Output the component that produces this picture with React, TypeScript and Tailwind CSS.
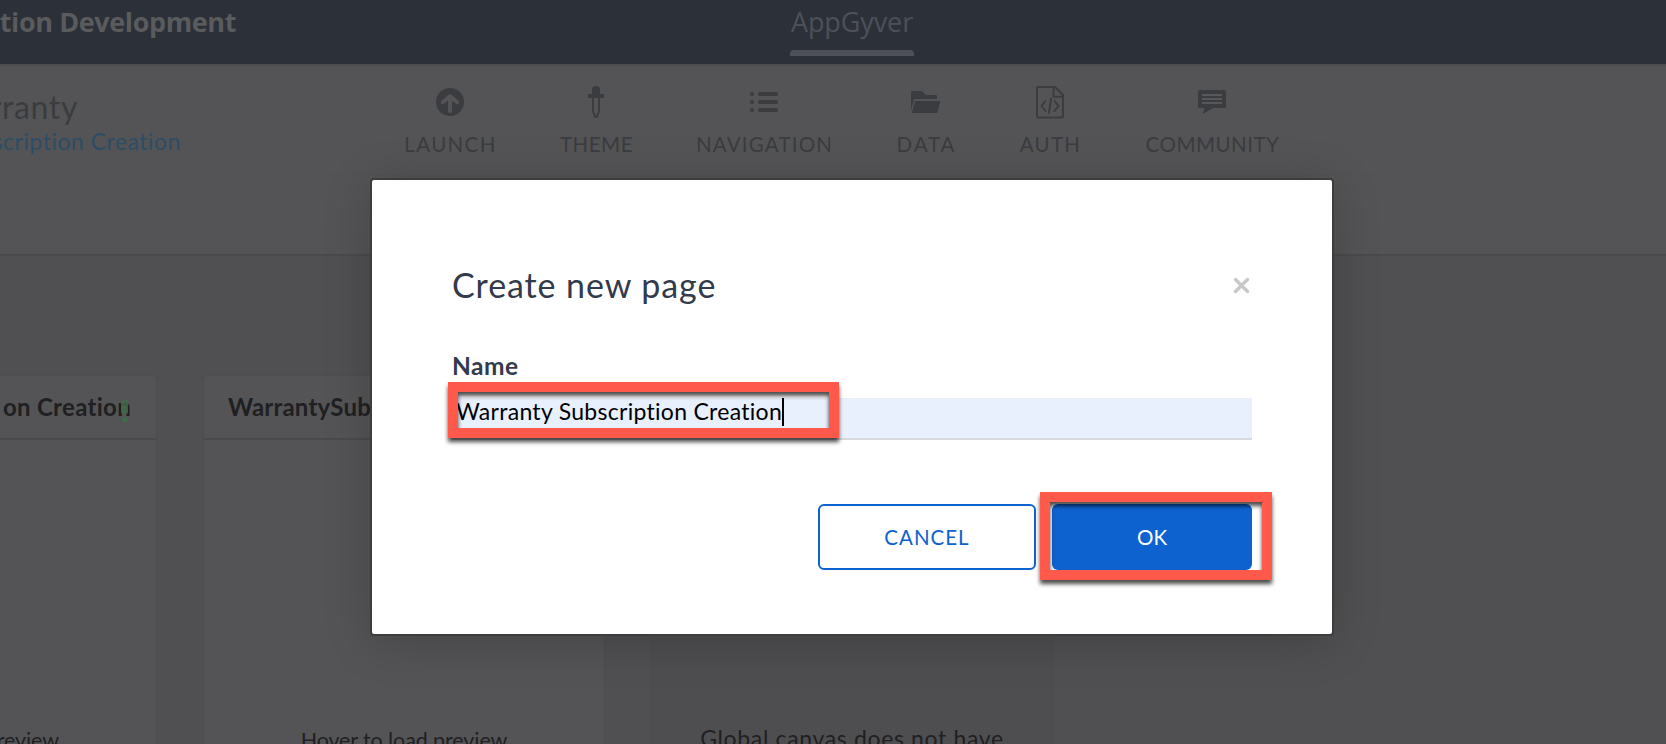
import type { ReactNode } from "react";

const icon = "#3b3c40";

function LaunchIcon() {
  return (
    <svg width="28" height="28" viewBox="0 0 28 28">
      <circle cx="14" cy="14" r="14" fill={icon} />
      <path d="M14 23V8.5M6.8 14.3L14 8.2l7.2 6.1" fill="none" stroke="#545456" strokeWidth="4" strokeLinecap="round" strokeLinejoin="round" />
    </svg>
  );
}

function ThemeIcon() {
  return (
    <svg width="16" height="32" viewBox="0 0 16 32">
      <path d="M4 8V4a4 4 0 0 1 8 0v4h4v4H0V8z" fill={icon} />
      <path d="M5 12v13l2 5.8h2L11 25V12" fill="none" stroke={icon} strokeWidth="2" />
    </svg>
  );
}

function NavigationIcon() {
  return (
    <svg width="28" height="20" viewBox="0 0 28 20" fill={icon}>
      {[0, 8, 16].map((y) => (
        <g key={y}>
          <circle cx="2" cy={y + 2} r="2" />
          <rect x="8" y={y} width="20" height="4" rx="1.8" />
        </g>
      ))}
    </svg>
  );
}

function DataIcon() {
  return (
    <svg width="30" height="22" viewBox="0 0 30 22" fill={icon}>
      <path d="M0 20V1.2Q0 0 1.2 0H10q1 0 1.7.8L14.6 4H25q1 0 1 1v3H4q-1 0-1.3 1z" />
      <path d="M5 10h23.2q1.2 0 .9 1.2L26.7 21q-.3 1-1.3 1H.8L3.600 11q.3-1 1.400-1z" />
    </svg>
  );
}

function AuthIcon() {
  return (
    <svg width="28" height="33" viewBox="0 0 28 33" fill="none" stroke={icon} strokeWidth="2" strokeLinejoin="round" strokeLinecap="round">
      <path d="M1 2.200Q1 1 2.200 1H19l8 8v21.500q0 1-1 1H2q-1 0-1-1z" />
      <path d="M17.500 1v9.800H27" />
      <path d="M9.500 15L5.500 20l4 5M18.500 15l4 5-4 5M15 12.500L13 27" />
    </svg>
  );
}

function CommunityIcon() {
  return (
    <svg width="28" height="24" viewBox="0 0 28 24">
      <path d="M1.500 0h25Q28 0 28 1.500v15q0 1.500-1.500 1.500H15.500L4.500 24 6.500 18h-5Q0 18 0 16.500v-15Q0 0 1.500 0z" fill={icon} />
      <path d="M4 5h20M4 9h20M4 13h20" stroke="#58585a" strokeWidth="1.800" />
    </svg>
  );
}

const tools: { label: string; cls: string; icon: ReactNode }[] = [
  { label: "LAUNCH", cls: "w-[90px] tracking-[1.36px]", icon: <LaunchIcon /> },
  { label: "THEME", cls: "w-[72px] tracking-[0.5px]", icon: <ThemeIcon /> },
  { label: "NAVIGATION", cls: "w-[134px] tracking-[1.2px]", icon: <NavigationIcon /> },
  { label: "DATA", cls: "w-[60px] tracking-[1.9px]", icon: <DataIcon /> },
  { label: "AUTH", cls: "w-[58px] tracking-[1.27px]", icon: <AuthIcon /> },
  { label: "COMMUNITY", cls: "w-[136px] tracking-[0.5px]", icon: <CommunityIcon /> },
];

function Header() {
  return (
    <header className="flex h-16 shrink-0 bg-[#2c3038] font-['Open_Sans',sans-serif] text-[27px] leading-[43px]">
      <div className="flex w-[236px] justify-end whitespace-nowrap font-bold tracking-[-0.4px] text-[#5a5b5d]">tion Development</div>
      <div className="ml-[554px] flex w-[124px] flex-col items-center text-[#4d5059]">
        <span className="tracking-[-0.1px]">AppGyver</span>
        <span className="mt-[7px] h-[6px] w-full rounded-t-[4px] bg-[#4d5059]" />
      </div>
    </header>
  );
}

function Toolbar() {
  return (
    <div className="flex h-[112px] shrink-0 border-b border-t-2 border-b-[#525254] border-t-[#4c4c4e] bg-[#545456]">
      <div className="w-[405px] pt-[23px]">
        <div className="flex w-[78px] justify-end whitespace-nowrap text-[32px] leading-9 tracking-[0.6px] text-[#3b3c40]">rranty</div>
        <div className="mt-0.5 flex w-[181px] justify-end whitespace-nowrap text-[23px] leading-7 tracking-[0.5px] text-[#2c4d65]">scription Creation</div>
      </div>
      <nav className="flex gap-[65px] pt-[18px] text-[20.5px] leading-6 text-[#3b3c40]">
        {tools.map((t) => (
          <div key={t.label} className={"flex flex-col items-center whitespace-nowrap " + t.cls}>
            <div className="flex h-9 items-center">{t.icon}</div>
            <div className="mt-3 pl-px">{t.label}</div>
          </div>
        ))}
      </nav>
    </div>
  );
}

function Cards() {
  return (
    <div className="flex h-[368px] text-[#1f2022]">
      <div className="w-[156px] rounded-tr-[4px] bg-[#545456] shadow-[0_0_2px_rgba(0,0,0,0.1)]">
        <div className="relative flex h-16 items-center justify-end whitespace-nowrap border-b-2 border-[#4a4a4c] pr-[25px] text-2xl font-bold leading-7 tracking-[0.3px]">
          on Creation
          <span className="absolute left-[121px] top-6 h-[14px] w-[7px] rounded-[2px] bg-[#42694a]/85" />
          <span className="absolute left-[122px] top-[41px] h-[5px] w-[6px] rounded-[2px] bg-[#42694a]" />
        </div>
        <div className="flex justify-end pr-[97px] pt-[287px] text-[21.5px] leading-[26px] tracking-[-0.1px]">review</div>
      </div>
      <div className="ml-12 w-[400px] rounded-t-[4px] bg-[#545456] shadow-[0_0_2px_rgba(0,0,0,0.1)]">
        <div className="flex h-16 items-center border-b-2 border-[#4a4a4c] pl-[24px] text-2xl font-bold leading-7 tracking-[0.2px]">WarrantySub</div>
        <div className="pt-[287px] text-center text-[21.5px] leading-[26px] tracking-[-0.1px]">Hover to load preview</div>
      </div>
      <div className="ml-[46px] w-[404px] bg-[#4e4e50] pt-[349px] text-center text-[23px] leading-[26px] tracking-[0.65px]">Global canvas does not have</div>
    </div>
  );
}

function Dialog() {
  return (
    <div className="relative flex h-[454px] w-[960px] flex-col rounded-[2px] bg-white px-20 pt-[85px] shadow-[0_0_0_2px_#3d3d3e,0_6px_50px_rgba(0,0,0,0.2)]">
      <div className="flex h-10 items-center justify-between">
        <h1 className="text-[34px] leading-10 tracking-[0.92px] text-[#323a4b]">Create new page</h1>
        <svg className="mr-[2px]" width="17" height="17" viewBox="0 0 17 17">
          <path d="M2.500 2.500l12 12M14.500 2.500l-12 12" stroke="#c8c8c8" strokeWidth="3.400" strokeLinecap="round" />
        </svg>
      </div>
      <label className="mt-[47px] text-[24.5px] font-bold leading-7 tracking-[0.5px] text-[#323a4b]">Name</label>
      <div className="mt-[18px] flex h-[42px] border-b-2 border-[#d8d9dc] bg-[#e8effd] pl-1 text-black">
        <span className="text-[23px] leading-[26px] tracking-[0.29px]">Warranty Subscription Creation</span>
        <span className="h-7 w-[2px] bg-black" />
      </div>
      <div className="mt-16 flex justify-end gap-4 text-[20.5px] leading-6">
        <button className="h-[66px] w-[218px] rounded-[6px] border-2 border-[#0d62d0] pb-px tracking-[1px] text-[#0d62d0]">CANCEL</button>
        <button className="h-[66px] w-[200px] rounded-[6px] bg-[#0d62d0] pb-px text-white">OK</button>
      </div>
      <div className="absolute left-[76px] top-[202px] h-[56px] w-[391px] border-[10px] border-[#ff594b] drop-shadow-[0_4px_2px_rgba(0,0,0,0.7)]" />
      <div className="absolute left-[668px] top-[312px] h-[88px] w-[232px] border-[10px] border-[#ff594b] drop-shadow-[0_4px_2px_rgba(0,0,0,0.7)]" />
    </div>
  );
}

export default function App() {
  return (
    <div className="relative h-[744px] w-full overflow-hidden bg-[#505052] font-[Lato,sans-serif]">
      <div className="flex h-full flex-col">
        <Header />
        <Toolbar />
        <div className="h-20 shrink-0 border-b-2 border-[#4a4a4c] bg-[#545456]" />
        <main className="pt-[120px]">
          <Cards />
        </main>
      </div>
      <div className="absolute inset-0 flex items-start pl-[372px] pt-[180px]">
        <Dialog />
      </div>
    </div>
  );
}
